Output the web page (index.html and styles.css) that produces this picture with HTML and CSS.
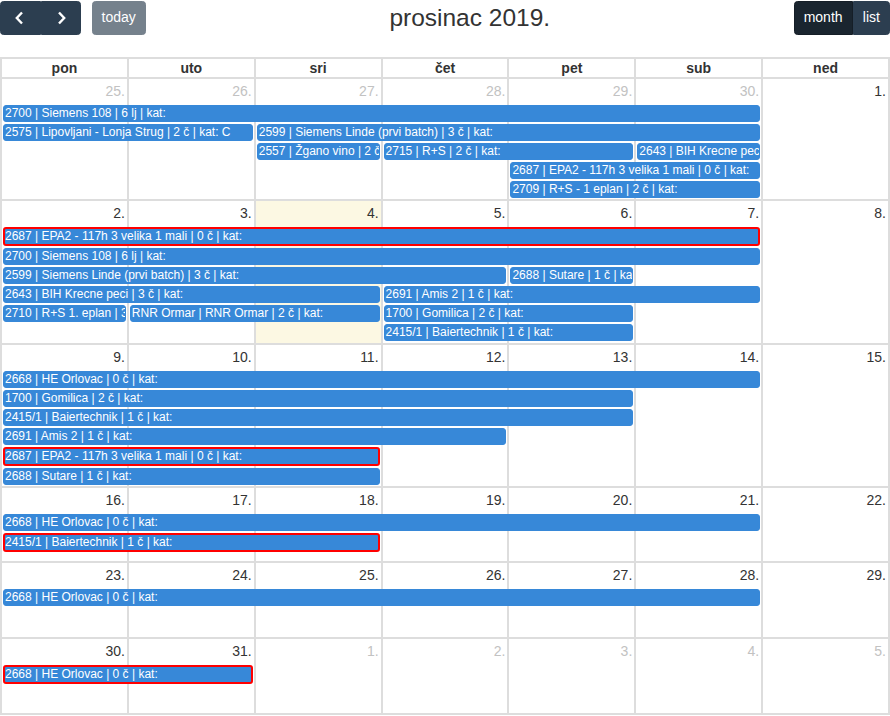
FILE: index.html
```html
<!DOCTYPE html>
<html lang="hr">
<head>
<meta charset="utf-8">
<title>prosinac 2019.</title>
<link rel="stylesheet" href="styles.css">
</head>
<body>
<div class="fc">
  <div class="toolbar">
    <div class="left">
      <div class="group">
        <button class="btn icon-btn" aria-label="prev"><svg width="12" height="14" viewBox="0 0 12 14"><polyline points="8,1.5 2.8,7 8,12.5" fill="none" stroke="#fff" stroke-width="2.4"/></svg></button>
        <button class="btn icon-btn" aria-label="next"><svg width="12" height="14" viewBox="0 0 12 14"><polyline points="4,1.5 9.2,7 4,12.5" fill="none" stroke="#fff" stroke-width="2.4"/></svg></button>
      </div>
      <button class="btn today" disabled>today</button>
    </div>
    <h2 class="title">prosinac 2019.</h2>
    <div class="group">
      <button class="btn active">month</button>
      <button class="btn">list</button>
    </div>
  </div>

  <div class="cal">
    <div class="head">
      <div class="hcell">pon</div><div class="hcell">uto</div><div class="hcell">sri</div><div class="hcell">čet</div><div class="hcell">pet</div><div class="hcell">sub</div><div class="hcell">ned</div>
    </div>

    <div class="week h1">
      <div class="day c1 other"><span class="num">25.</span></div>
      <div class="day c2 other"><span class="num">26.</span></div>
      <div class="day c3 other"><span class="num">27.</span></div>
      <div class="day c4 other"><span class="num">28.</span></div>
      <div class="day c5 other"><span class="num">29.</span></div>
      <div class="day c6 other"><span class="num">30.</span></div>
      <div class="day c7"><span class="num">1.</span></div>
      <div class="ev l1 c1 s6">2700 | Siemens 108 | 6 lj | kat:</div>
      <div class="ev l2 c1 s2">2575 | Lipovljani - Lonja Strug | 2 č | kat: C</div>
      <div class="ev l2 c3 s4">2599 | Siemens Linde (prvi batch) | 3 č | kat:</div>
      <div class="ev l3 c3 s1">2557 | Žgano vino | 2 č | kat:</div>
      <div class="ev l3 c4 s2">2715 | R+S | 2 č | kat:</div>
      <div class="ev l3 c6 s1">2643 | BIH Krecne peci | 3 č | kat:</div>
      <div class="ev l4 c5 s2">2687 | EPA2 - 117h 3 velika 1 mali | 0 č | kat:</div>
      <div class="ev l5 c5 s2">2709 | R+S - 1 eplan | 2 č | kat:</div>
    </div>

    <div class="week h2">
      <div class="day c1"><span class="num">2.</span></div>
      <div class="day c2"><span class="num">3.</span></div>
      <div class="day c3 today-cell"><span class="num">4.</span></div>
      <div class="day c4"><span class="num">5.</span></div>
      <div class="day c5"><span class="num">6.</span></div>
      <div class="day c6"><span class="num">7.</span></div>
      <div class="day c7"><span class="num">8.</span></div>
      <div class="ev red l1 c1 s6">2687 | EPA2 - 117h 3 velika 1 mali | 0 č | kat:</div>
      <div class="ev l2 c1 s6">2700 | Siemens 108 | 6 lj | kat:</div>
      <div class="ev l3 c1 s4">2599 | Siemens Linde (prvi batch) | 3 č | kat:</div>
      <div class="ev l3 c5 s1">2688 | Sutare | 1 č | kat:</div>
      <div class="ev l4 c1 s3">2643 | BIH Krecne peci | 3 č | kat:</div>
      <div class="ev l4 c4 s3">2691 | Amis 2 | 1 č | kat:</div>
      <div class="ev l5 c1 s1">2710 | R+S 1. eplan | 3 č | kat:</div>
      <div class="ev l5 c2 s2">RNR Ormar | RNR Ormar | 2 č | kat:</div>
      <div class="ev l5 c4 s2">1700 | Gomilica | 2 č | kat:</div>
      <div class="ev l6 c4 s2">2415/1 | Baiertechnik | 1 č | kat:</div>
    </div>

    <div class="week h3">
      <div class="day c1"><span class="num">9.</span></div>
      <div class="day c2"><span class="num">10.</span></div>
      <div class="day c3"><span class="num">11.</span></div>
      <div class="day c4"><span class="num">12.</span></div>
      <div class="day c5"><span class="num">13.</span></div>
      <div class="day c6"><span class="num">14.</span></div>
      <div class="day c7"><span class="num">15.</span></div>
      <div class="ev l1 c1 s6">2668 | HE Orlovac | 0 č | kat:</div>
      <div class="ev l2 c1 s5">1700 | Gomilica | 2 č | kat:</div>
      <div class="ev l3 c1 s5">2415/1 | Baiertechnik | 1 č | kat:</div>
      <div class="ev l4 c1 s4">2691 | Amis 2 | 1 č | kat:</div>
      <div class="ev red l5 c1 s3">2687 | EPA2 - 117h 3 velika 1 mali | 0 č | kat:</div>
      <div class="ev l6 c1 s3">2688 | Sutare | 1 č | kat:</div>
    </div>

    <div class="week h4">
      <div class="day c1"><span class="num">16.</span></div>
      <div class="day c2"><span class="num">17.</span></div>
      <div class="day c3"><span class="num">18.</span></div>
      <div class="day c4"><span class="num">19.</span></div>
      <div class="day c5"><span class="num">20.</span></div>
      <div class="day c6"><span class="num">21.</span></div>
      <div class="day c7"><span class="num">22.</span></div>
      <div class="ev l1 c1 s6">2668 | HE Orlovac | 0 č | kat:</div>
      <div class="ev red l2 c1 s3">2415/1 | Baiertechnik | 1 č | kat:</div>
    </div>

    <div class="week h5">
      <div class="day c1"><span class="num">23.</span></div>
      <div class="day c2"><span class="num">24.</span></div>
      <div class="day c3"><span class="num">25.</span></div>
      <div class="day c4"><span class="num">26.</span></div>
      <div class="day c5"><span class="num">27.</span></div>
      <div class="day c6"><span class="num">28.</span></div>
      <div class="day c7"><span class="num">29.</span></div>
      <div class="ev l1 c1 s6">2668 | HE Orlovac | 0 č | kat:</div>
    </div>

    <div class="week h6">
      <div class="day c1"><span class="num">30.</span></div>
      <div class="day c2"><span class="num">31.</span></div>
      <div class="day c3 other"><span class="num">1.</span></div>
      <div class="day c4 other"><span class="num">2.</span></div>
      <div class="day c5 other"><span class="num">3.</span></div>
      <div class="day c6 other"><span class="num">4.</span></div>
      <div class="day c7 other"><span class="num">5.</span></div>
      <div class="ev red l1 c1 s2">2668 | HE Orlovac | 0 č | kat:</div>
    </div>
  </div>
</div>
</body>
</html>
```

FILE: styles.css
```css
* { box-sizing: border-box; }
html, body { margin: 0; padding: 0; background: #fff; }
body {
  font-family: "Liberation Sans", Arial, sans-serif;
  font-size: 14px;
  color: #333;
}
.fc { width: 890px; }

/* toolbar */
.toolbar {
  display: flex;
  justify-content: space-between;
  align-items: center;
  height: 35px;
  margin-bottom: 22px;
}
.left { display: flex; align-items: flex-start; }
.group { display: flex; }
.btn {
  font-family: "Liberation Sans", Arial, sans-serif;
  font-size: 14px;
  line-height: 21px;
  height: 34px;
  padding: 5.6px 9.1px;
  color: #fff;
  background: #2c3e50;
  border: 1px solid #2c3e50;
  border-radius: 3.5px;
  margin: 0;
  cursor: pointer;
}
.group .btn:not(:first-child) { border-top-left-radius: 0; border-bottom-left-radius: 0; }
.group .btn:not(:last-child) { border-top-right-radius: 0; border-bottom-right-radius: 0; }
.icon-btn { width: 40.5px; display: flex; align-items: center; justify-content: center; padding: 0; }
.btn.active { background: #1a252f; border-color: #151e27; }
.today { margin-left: 10.5px; opacity: .65; cursor: default; }
.title {
  margin: 0;
  font-size: 24.5px;
  font-weight: normal;
  color: #333;
  line-height: 30px;
}

/* calendar */
.cal {
  background: #ddd;
  padding: 2px;
  display: flex;
  flex-direction: column;
  gap: 2px;
}
.head, .week {
  display: grid;
  grid-template-columns: repeat(7, 1fr);
  column-gap: 2px;
}
.hcell {
  background: #fff;
  height: 18px;
  line-height: 18px;
  text-align: center;
  font-weight: bold;
  font-size: 14px;
  color: #333;
}
.week {
  grid-template-rows: 24px repeat(6, min-content) 1fr;
}
.week.h1 { height: 120px; }
.week.h2 { height: 142px; }
.week.h3 { height: 141px; }
.week.h4 { height: 73px; }
.week.h5 { height: 74px; }
.week.h6 { height: 74px; }

.day {
  grid-row: 1 / -1;
  background: #fff;
  text-align: right;
}
.day.today-cell { background: #fcf8e3; }
.num {
  display: block;
  padding: 2px 2px 0 0;
  line-height: 20px;
  font-size: 14px;
  color: #333;
}
.other .num { color: #c2c2c2; }

.c1 { grid-column-start: 1; }
.c2 { grid-column-start: 2; }
.c3 { grid-column-start: 3; }
.c4 { grid-column-start: 4; }
.c5 { grid-column-start: 5; }
.c6 { grid-column-start: 6; }
.c7 { grid-column-start: 7; }
.s1 { grid-column-end: span 1; }
.s2 { grid-column-end: span 2; }
.s3 { grid-column-end: span 3; }
.s4 { grid-column-end: span 4; }
.s5 { grid-column-end: span 5; }
.s6 { grid-column-end: span 6; }
.l1 { grid-row: 2; }
.l2 { grid-row: 3; }
.l3 { grid-row: 4; }
.l4 { grid-row: 5; }
.l5 { grid-row: 6; }
.l6 { grid-row: 7; }

.ev {
  margin: 2px 1px 0 1px;
  background: #3788d8;
  border: 1px solid #3788d8;
  border-radius: 3px;
  color: #fff;
  font-size: 12px;
  line-height: 15px;
  padding: 0 1px;
  white-space: nowrap;
  overflow: hidden;
}
.ev.red { border: 2px solid #ff0000; padding-left: 0; }
```
